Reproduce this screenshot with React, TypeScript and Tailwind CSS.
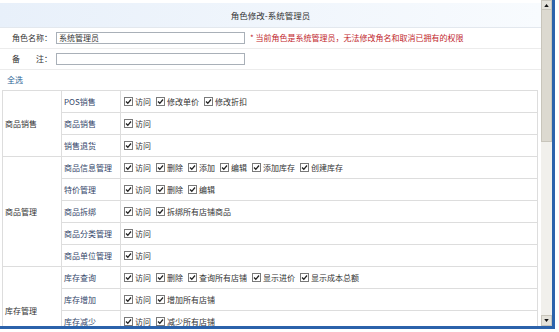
import React from "react";

type Row = [string, string[]];
type Group = { name: string; rows: Row[] };

const groups: Group[] = [
  {
    name: "商品销售",
    rows: [
      ["POS销售", ["访问", "修改单价", "修改折扣"]],
      ["商品销售", ["访问"]],
      ["销售退货", ["访问"]],
    ],
  },
  {
    name: "商品管理",
    rows: [
      ["商品信息管理", ["访问", "删除", "添加", "编辑", "添加库存", "创建库存"]],
      ["特价管理", ["访问", "删除", "编辑"]],
      ["商品拆绑", ["访问", "拆绑所有店铺商品"]],
      ["商品分类管理", ["访问"]],
      ["商品单位管理", ["访问"]],
    ],
  },
  {
    name: "库存管理",
    rows: [
      ["库存查询", ["访问", "删除", "查询所有店铺", "显示进价", "显示成本总额"]],
      ["库存增加", ["访问", "增加所有店铺"]],
      ["库存减少", ["访问", "减少所有店铺"]],
      ["库存盘点", ["访问"]],
    ],
  },
];

function Check() {
  return (
    <span className="mr-[2px] inline-flex h-[9px] w-[9px] shrink-0 items-center justify-center border border-[#7a7a7a] bg-white">
      <svg viewBox="0 0 7 7" className="h-[7px] w-[7px]">
        <path d="M1 3.5 L2.8 5.3 L6 1.5" fill="none" stroke="#222" strokeWidth="1.3" />
      </svg>
    </span>
  );
}

function Perm({ label }: { label: string }) {
  return (
    <span className="mr-[5px] inline-flex items-center">
      <Check />
      {label}
    </span>
  );
}

function ScrollBar() {
  return (
    <div className="flex w-[11px] shrink-0 flex-col bg-[#f1f0ec]">
      <div className="flex h-[10px] items-center justify-center border border-[#c8c5bb] bg-[#e4e2da]">
        <svg viewBox="0 0 6 4" className="h-[3px] w-[5px]">
          <path d="M0 4 L3 0 L6 4 Z" fill="#111" />
        </svg>
      </div>
      <div className="h-[132px] border-x border-b border-[#c8c5bb] bg-[#dcd9d0]" />
      <div className="flex-1" />
      <div className="flex h-[11px] items-center justify-center border border-[#c8c5bb] bg-[#e4e2da]">
        <svg viewBox="0 0 6 4" className="h-[3px] w-[5px]">
          <path d="M0 0 L6 0 L3 4 Z" fill="#111" />
        </svg>
      </div>
    </div>
  );
}

export default function App() {
  return (
    <div
      className="h-[332px] w-[559px] overflow-hidden bg-white text-[8px] leading-none text-[#333]"
      style={{ fontFamily: '"Noto Sans CJK SC", "Noto Sans", sans-serif' }}
    >
      <div className="flex h-[329px] w-[555px] border-b-[3px] border-r-[3px] border-[#2b62ab]">
        <div className="h-full w-[541px] overflow-hidden">
          <div className="mt-[3px] flex h-[25px] items-center justify-center border-b border-[#e3e8ee] bg-gradient-to-r from-[#e8f0fa] to-[#f8fbfe] text-[8.5px] text-[#333]">
            角色修改-系统管理员
          </div>

          <div className="flex h-[21px] items-center border-b border-[#ececec]">
            <span className="w-[56px] pl-[12px]">角色名称：</span>
            <span className="flex h-[12px] w-[189px] items-center border border-[#a9b0b8] bg-white px-[2px]">
              系统管理员
            </span>
            <span className="ml-[5px] text-[#c1272d]">* 当前角色是系统管理员，无法修改角名和取消已拥有的权限</span>
          </div>

          <div className="flex h-[21px] items-center border-b border-[#ececec]">
            <span className="w-[56px] pl-[12px] tracking-[0px]">
              备<span className="inline-block w-[16px]" />注：
            </span>
            <span className="h-[12px] w-[189px] border border-[#a9b0b8] bg-white" />
          </div>

          <div className="flex h-[20px] items-center pl-[7px] text-[#2a6496]">全选</div>

          <table className="ml-[2px] w-[536px] table-fixed border-collapse">
            <colgroup>
              <col className="w-[59px]" />
              <col className="w-[59px]" />
              <col />
            </colgroup>
            <tbody>
              {groups.map((g) =>
                g.rows.map(([sub, perms], i) => (
                  <tr key={g.name + sub} className="h-[22px]">
                    {i === 0 && (
                      <td
                        rowSpan={g.rows.length}
                        className="border border-[#dddddd] pl-[2px] align-middle text-[#333]"
                      >
                        {g.name}
                      </td>
                    )}
                    <td className="border border-[#dddddd] pl-[2px] align-middle text-[#34466a]">{sub}</td>
                    <td className="border border-[#dddddd] pl-[3px] align-middle">
                      <div className="flex items-center whitespace-nowrap">
                        {perms.map((p) => (
                          <Perm key={p} label={p} />
                        ))}
                      </div>
                    </td>
                  </tr>
                ))
              )}
            </tbody>
          </table>
        </div>
        <ScrollBar />
      </div>
    </div>
  );
}
